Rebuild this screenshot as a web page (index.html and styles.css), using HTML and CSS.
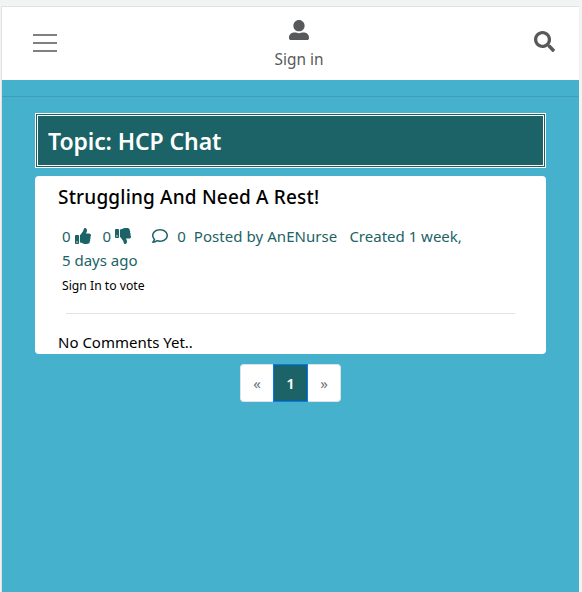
FILE: index.html
```html
<!DOCTYPE html>
<html lang="en">
<head>
<meta charset="utf-8">
<title>Topic: HCP Chat</title>
<link rel="stylesheet" href="styles.css">
</head>
<body>
<div class="frame">
  <header class="navbar">
    <div class="menu"><i></i><i></i><i></i></div>
    <div class="signin">
      <svg class="user" viewBox="0 0 512 512"><path d="M256 288c79.500 0 144-64.500 144-144S335.500 0 256 0 112 64.500 112 144s64.500 144 144 144zm128 32h-55.100c-22.200 10.200-46.900 16-72.900 16s-50.600-5.800-72.900-16H128C57.300 320 0 377.300 0 448v16c0 26.500 21.500 48 48 48h416c26.500 0 48-21.500 48-48v-16c0-70.700-57.300-128-128-128z"/></svg>
      <span class="signin-label">Sign in</span>
    </div>
    <svg class="search" viewBox="0 0 512 512"><path d="M505 442.700L405.300 343c-4.500-4.500-10.600-7-17-7H372c27.600-35.300 44-79.700 44-128C416 93.100 322.900 0 208 0S0 93.100 0 208s93.100 208 208 208c48.300 0 92.700-16.400 128-44v16.300c0 6.400 2.500 12.500 7 17l99.700 99.700c9.400 9.400 24.600 9.400 33.900 0l28.300-28.300c9.400-9.400 9.400-24.600.1-34zM208 336c-70.700 0-128-57.200-128-128 0-70.700 57.200-128 128-128 70.700 0 128 57.200 128 128 0 70.700-57.200 128-128 128z"/></svg>
  </header>
  <hr class="divider">
  <main class="content">
    <h1 class="topic"><span>Topic: HCP Chat</span></h1>
    <article class="card">
      <h2 class="title"><span>Struggling And Need A Rest!</span></h2>
      <div class="meta">
        <span class="up">0</span>
        <svg class="thumb" viewBox="0 0 512 512"><path d="M104 224H24c-13.300 0-24 10.700-24 24v240c0 13.300 10.700 24 24 24h80c13.300 0 24-10.700 24-24V248c0-13.300-10.700-24-24-24zM64 472a24 24 0 1 1 0-48 24 24 0 0 1 0 48zM384 81.500c0 42.400-26 66.200-33.300 94.500h101.700c33.400 0 59.400 27.700 59.600 58.100.1 17.900-7.500 37.200-19.400 49.100 9.800 23.300 8.200 56-9.300 79.500 8.700 25.900-.1 57.700-16.500 74.800 4.300 17.600 2.300 32.600-6.200 44.700C440.100 511.600 388.800 512 345.500 512h-2.900c-48.900 0-88.900-17.800-121-32.100-16.200-7.200-37.300-16.100-53.300-16.400A12 12 0 0 1 156.500 451.500V237.700c0-3.200 1.300-6.300 3.600-8.500 39.600-39.100 56.600-80.600 89.100-113.100 14.800-14.800 20.200-37.200 25.400-58.900C279.100 38.600 288.500 0 312 0c24 0 72 8 72 81.500z"/></svg>
        <span class="down">0</span>
        <svg class="thumb" viewBox="0 0 512 512"><path d="M0 56v240c0 13.300 10.700 24 24 24h80c13.300 0 24-10.700 24-24V56c0-13.300-10.700-24-24-24H24C10.700 32 0 42.700 0 56zm40 200a24 24 0 1 1 48 0 24 24 0 0 1-48 0zM312 512c-23.500 0-32.900-38.600-37.400-57.200-5.200-21.700-10.600-44.100-25.400-58.900-32.500-32.500-49.500-74-89.100-113.100a12 12 0 0 1-3.600-8.500V60.500c0-6.500 5.200-11.900 11.800-12 16-.3 37.100-9.200 53.300-16.400C253.700 17.800 293.700 0 342.600 0h2.900c43.300 0 94.600.4 115.400 30.700 8.500 12.100 10.500 27.100 6.200 44.700 16.400 17.100 25.200 48.900 16.500 74.800 17.500 23.500 19.100 56.200 9.300 79.500 11.900 11.900 19.500 31.200 19.400 49.100-.2 30.400-26.200 58.100-59.600 58.100H350.700c7.300 28.300 33.300 51.100 33.300 93.600 0 73.500-48 81.500-72 81.500z"/></svg>
        <svg class="comment" viewBox="0 0 512 512"><path d="M256 32C114.600 32 0 125.100 0 240c0 47.600 19.900 91.200 52.900 126.300C38 405.700 7 439.100 6.500 439.500c-6.600 7-8.400 17.200-4.600 26S14.400 480 24 480c61.500 0 110-25.700 139.100-46.300C192 442.800 223.200 448 256 448c141.400 0 256-93.100 256-208S397.400 32 256 32zm0 368c-26.700 0-53.100-4.100-78.400-12.100l-22.700-7.200-19.500 13.800c-14.300 10.100-33.900 21.400-57.500 29 7.300-12.100 14.400-25.700 19.900-40.200l10.600-28.100-20.600-21.800C69.700 314.100 48 282.200 48 240c0-88.200 93.300-160 208-160s208 71.800 208 160-93.300 160-208 160z"/></svg>
        <span class="count">0</span>
        <span class="author">Posted by AnENurse</span>
        <span class="created">Created 1 week,</span>
      </div>
      <div class="age"><span>5 days ago</span></div>
      <div class="vote"><span>Sign In to vote</span></div>
      <hr class="line">
      <div class="none"><span>No Comments Yet..</span></div>
    </article>
    <nav class="pages"><span class="prev">«</span><span class="current">1</span><span class="next">»</span></nav>
  </main>
</div>
</body>
</html>
```
FILE: styles.css
```css
* { box-sizing: border-box; }
html { background: #f2f3f3; }
body {
  margin: 0;
  height: 592px;
  overflow: hidden;
  padding: 6px 3px 0 1px;
  font: 15px/24px "Noto Sans", "Open Sans", sans-serif;
  white-space: nowrap;
}
.frame {
  height: 586px;
  border: 1px solid #e0e1e1;
  border-width: 1px 0 0 1px;
  background: #45b1cd;
}
.navbar {
  height: 73px;
  background: #fff;
  padding: 0 24px 0 31px;
  display: flex;
  justify-content: space-between;
  align-items: flex-start;
  color: #58595b;
}
.menu { width: 24px; margin-top: 27px; display: grid; gap: 6px; }
.menu i { height: 2px; background: #808080; }
.signin { display: grid; justify-items: center; margin: 12px 0 0 7px; }
.user { width: 20px; height: 22px; }
.signin-label { margin-top: 7px; font-size: 15.4px; }
.search { width: 21px; height: 21px; margin-top: 24px; }
svg { display: block; fill: currentColor; flex: none; }
.divider { margin: 16px 0; border: 0; height: 1px; background: #3e9fb8; }
.content { margin: 0 33px; }
.topic {
  height: 55px;
  margin: 0 0 8px;
  padding: 0 10px;
  border: 3px double #fff;
  background: #1b6366;
  color: #fff;
  font-size: 23px;
  letter-spacing: -0.1px;
  line-height: 50px;
  font-weight: 600;
}
.card {
  height: 178px;
  border-radius: 4px;
  background: #fff;
  padding: 7px 23px 0;
  color: #000;
}
.title { margin: 0; font-size: 19px; letter-spacing: 0.18px; line-height: 29px; font-weight: 500; }
.meta { display: flex; align-items: center; margin: 12px 0 0 4px; height: 24px; color: #1b6366; }
.thumb { width: 16px; height: 16px; margin: -1px 0 0 4px; }
.down { margin-left: 12px; }
.comment { width: 16px; height: 16px; margin-left: 21px; }
.count { margin-left: 9px; }
.author { margin-left: 8px; letter-spacing: 0.06px; }
.created { margin-left: 12px; }
.age { margin-left: 4px; color: #1b6366; }
.vote { margin: 4px 0 0 4px; font-size: 12.2px; line-height: 20px; }
.line { border: 0; height: 1px; background: #e2e2e2; margin: 17px 8px 16px; }
.none { font-size: 15px; line-height: 24px; }
.pages { display: flex; width: 101px; height: 38px; margin: 10px auto 0 205px; line-height: 36px; text-align: center; }
.pages span { border: 1px solid #dee2e6; background: #fff; color: #6c757d; }
.pages .prev { width: 33px; border-right: 0; border-radius: 4px 0 0 4px; }
.pages .current { width: 35px; border-color: #007bff; background: #1b6366; color: #fff; font-weight: 600; }
.pages .next { width: 33px; border-left: 0; border-radius: 0 4px 4px 0; }
```
